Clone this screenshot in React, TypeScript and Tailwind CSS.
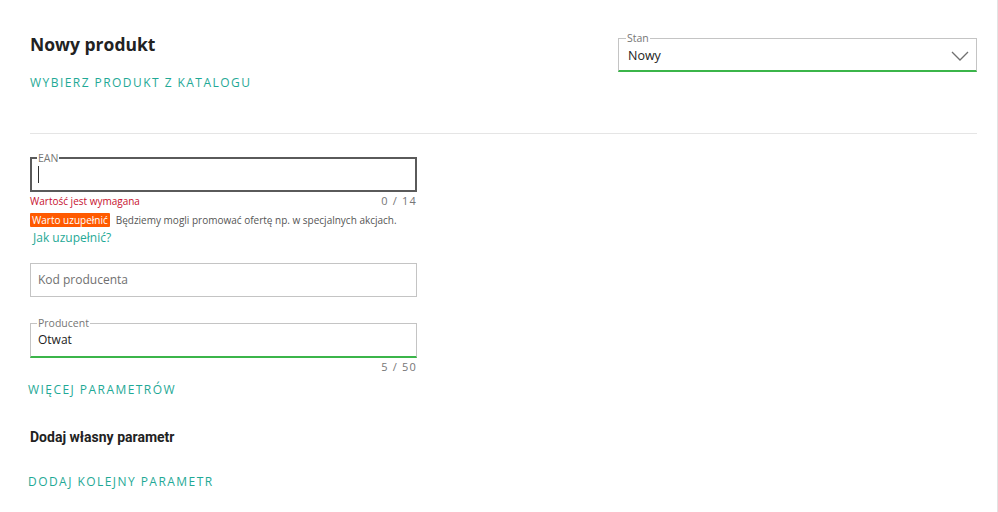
const teal = 'text-[#1fa996]';

const Counter = ({ text }: { text: string }) => (
  <span className="text-[11px] text-[#767676] tracking-[1.2px]">{text}</span>
);

export default function App() {
  return (
    <div
      className="w-[998px] h-[512px] border-r border-[#e3e3e3] bg-white pl-[30px] pr-[20px] pt-[32px] overflow-hidden text-[#222]"
      style={{ fontFamily: '"Open Sans", sans-serif' }}
    >
      <div className="flex justify-between items-start">
        <div>
          <h1 className="text-[17.5px] leading-[24px] font-bold text-[#222]">Nowy produkt</h1>
          <button className={`mt-[19px] block text-[12px] leading-[16px] tracking-[1.45px] ${teal}`}>
            WYBIERZ PRODUKT Z KATALOGU
          </button>
        </div>
        <fieldset className="w-[359px] border border-[#c4c4c4] border-b-2 border-b-[#3bb54a] px-[7px] pb-[2px]">
          <legend className="text-[10.5px] leading-[12px] text-[#767676] px-[1px]">Stan</legend>
          <div className="flex items-center justify-between h-[24px] pt-[1px] pl-[2px]">
            <span className="text-[12.5px] text-[#222]">Nowy</span>
            <svg width="18" height="11" viewBox="0 0 18 11">
              <polyline points="1,1 9,9 17,1" fill="none" stroke="#707070" strokeWidth="1.3" />
            </svg>
          </div>
        </fieldset>
      </div>

      <div className="mt-[42px] h-px bg-[#e5e5e5]" />

      <div className="w-[387px] mt-[18px]">
        <fieldset className="border-2 border-[#5a5a5a] px-[5px] pb-[2px]">
          <legend className="text-[10.5px] leading-[12px] text-[#767676] px-[1px]">EAN</legend>
          <div className="h-[24px] flex items-center pl-[1px]">
            <span className="w-px h-[17px] bg-[#333] -mt-[3px]" />
          </div>
        </fieldset>
        <div className="mt-[2px] flex justify-between leading-[14px]">
          <span className="text-[10px] text-[#c7102e]">Wartość jest wymagana</span>
          <Counter text="0 / 14" />
        </div>
      </div>
      <div className="mt-[5px] flex items-center">
        <span className="bg-[#ff5a00] text-white text-[10px] leading-[14px] px-[2px] rounded-[1px]">Warto uzupełnić</span>
        <span className="ml-[6px] text-[10px] leading-[14px] text-[#555]">
          Będziemy mogli promować ofertę np. w specjalnych akcjach.
        </span>
      </div>
      <a className={`mt-[3px] block pl-[3px] text-[12px] leading-[16px] ${teal}`}>Jak uzupełnić?</a>

      <div className="mt-[17px] w-[387px] h-[34px] border border-[#c4c4c4] px-[7px] flex items-center">
        <span className="text-[12px] text-[#707070]">Kod producenta</span>
      </div>

      <div className="w-[387px] mt-[20px]">
        <fieldset className="border border-[#c4c4c4] border-b-2 border-b-[#3bb54a] px-[6px] pb-[6px]">
          <legend className="text-[10.5px] leading-[12px] text-[#767676] px-[1px]">Producent</legend>
          <div className="h-[21px] flex items-center pl-[1px]">
            <span className="text-[12px] text-[#222]">Otwat</span>
          </div>
        </fieldset>
        <div className="mt-[2px] flex justify-end leading-[14px]">
          <Counter text="5 / 50" />
        </div>
      </div>

      <button className={`mt-[8px] -ml-[2px] block text-[12px] leading-[16px] tracking-[1.45px] ${teal}`}>
        WIĘCEJ PARAMETRÓW
      </button>

      <h2
        className="mt-[29px] text-[14px] leading-[20px] font-bold text-[#222]"
        style={{ fontFamily: 'Roboto, sans-serif' }}
      >
        Dodaj własny parametr
      </h2>

      <button className={`mt-[27px] -ml-[2px] block text-[12px] leading-[16px] tracking-[1.45px] ${teal}`}>
        DODAJ KOLEJNY PARAMETR
      </button>
    </div>
  );
}
